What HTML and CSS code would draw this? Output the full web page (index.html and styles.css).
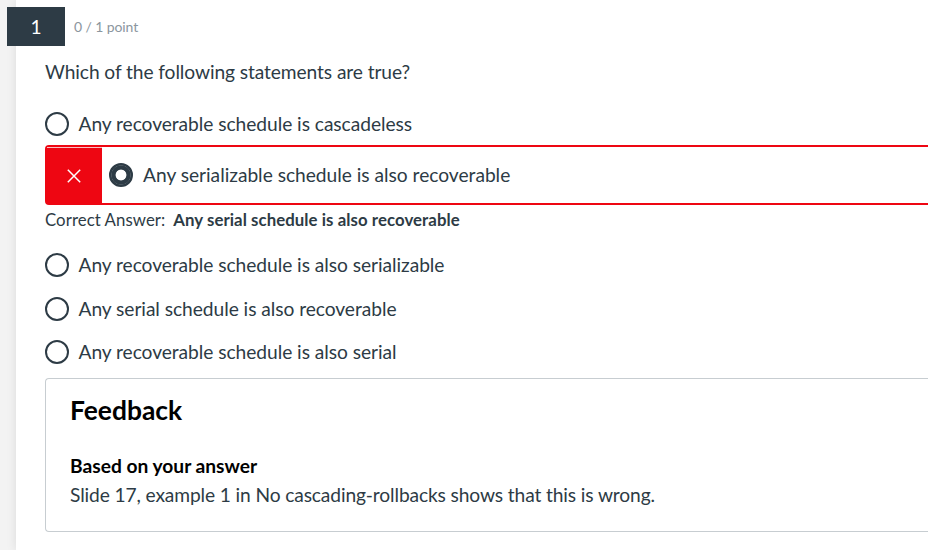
FILE: index.html
```
<!DOCTYPE html>
<html lang="en">
<head>
<meta charset="utf-8">
<title>Quiz results</title>
<link rel="stylesheet" href="styles.css">
</head>
<body>
<main class="question">
  <header class="header"><span class="number">1</span><span class="points">0 / 1 point</span></header>
  <p class="prompt"><span>Which of the following statements are true?</span></p>
  <div class="option first"><i class="radio"></i><span>Any recoverable schedule is cascadeless</span></div>
  <div class="wrong">
    <div class="mark"><svg width="14" height="14" viewBox="0 0 14 14"><path d="M.8.8l12.4 12.4M13.2.8L.8 13.2" stroke="#fff" stroke-width="1.5"/></svg></div>
    <i class="radio checked"></i><span>Any serializable schedule is also recoverable</span>
  </div>
  <p class="correct"><span>Correct Answer:</span><b>Any serial schedule is also recoverable</b></p>
  <div class="option"><i class="radio"></i><span>Any recoverable schedule is also serializable</span></div>
  <div class="option"><i class="radio"></i><span>Any serial schedule is also recoverable</span></div>
  <div class="option"><i class="radio"></i><span>Any recoverable schedule is also serial</span></div>
  <section class="feedback">
    <h2>Feedback</h2>
    <h3>Based on your answer</h3>
    <p>Slide 17, example 1 in No cascading-rollbacks shows that this is wrong.</p>
  </section>
</main>
</body>
</html>
```
FILE: styles.css
```
* { box-sizing: border-box; }
body {
  margin: 0;
  height: 550px;
  overflow: hidden;
  background: #f3f3f3;
  color: #2d3b45;
  font: 19.2px/24px Lato, sans-serif;
}
h2, h3, p { margin: 0; }
.question {
  height: 550px;
  margin-left: 16px;
  padding: 7px 0 0 29px;
  background: #fff;
  box-shadow: 0 0 10px rgba(0, 0, 0, .1);
}
.header { display: flex; align-items: center; height: 39px; margin-left: -38px; }
.number {
  width: 58px;
  height: 39px;
  background: #2d3b45;
  color: #fff;
  line-height: 40px;
  text-align: center;
}
.points { margin-left: 9px; color: #8b969e; font-size: 14px; letter-spacing: -.1px; }
.prompt { margin-top: 14px; letter-spacing: -.09px; }
.option {
  display: flex;
  align-items: center;
  gap: 9.5px;
  height: 24px;
  margin-bottom: 19.5px;
  letter-spacing: -.05px;
}
.option.first { margin: 28px 0 9px; }
.radio {
  flex: none;
  width: 24px;
  height: 24px;
  border: 2px solid #2d3b45;
  border-radius: 50%;
  background: #fff;
}
.radio.checked {
  margin: 0 10px 0 7px;
  background: radial-gradient(circle, #fff 5px, #2d3b45 5.8px 9.1px, #56626a 9.6px, #2d3b45 10.2px);
}
.wrong {
  display: flex;
  align-items: center;
  height: 60px;
  border: 2px solid #ee0612;
  border-right: 0;
  border-radius: 4px 0 0 4px;
  letter-spacing: -.02px;
}
.mark {
  display: flex;
  align-items: center;
  justify-content: center;
  width: 55px;
  height: 56px;
  padding-right: 1px;
  border-top: 1px solid #fbc0c3;
  background: #ee0612;
}
.correct { display: flex; gap: 8px; margin: 3px 0 21px; font-size: 16.8px; letter-spacing: .07px; }
.feedback {
  height: 154px;
  margin-top: -5.5px;
  padding: 17px 24px;
  border: 1px solid #c7cdd1;
  border-right: 0;
  border-radius: 4px 0 0 4px;
}
.feedback h2 { color: #000; font-size: 26.4px; line-height: 28px; }
.feedback h3 { margin-top: 30px; color: #000; font-size: 19.2px; line-height: 24px; }
.feedback p { margin-top: 5px; font-size: 19.2px; letter-spacing: -.12px; }
```
